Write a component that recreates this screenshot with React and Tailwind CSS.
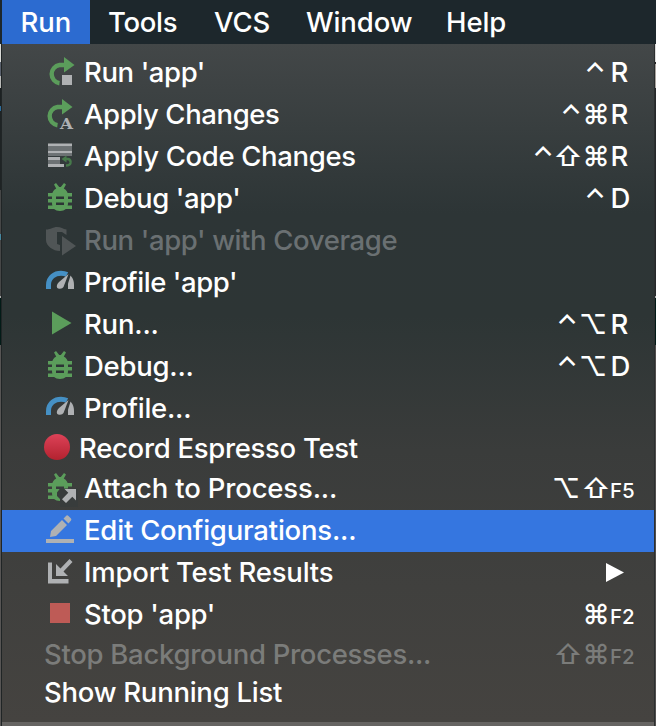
const GREEN = '#5b9d5b';
const GREY = '#afb1b3';

function RerunArrow({ dx = 0 }) {
  return (
    <g transform={`translate(${dx} 0)`}>
      <path d="M17 6H11.500A9.200 9.200 0 0 0 11.500 24.200" fill="none" stroke={GREEN} strokeWidth="4.400" />
      <path d="M16 -2L26.500 6L16 13.500Z" fill={GREEN} />
    </g>
  );
}

function Bug() {
  return (
    <g fill={GREEN}>
      <path d="M6 -0.500L8 -2L11.200 2H12.800L16 -2L18 -0.500L15.800 3.500C18.600 5 20 7.500 20 10.500V18C20 23 17 26 12 26S4 23 4 18V10.500C4 7.500 5.400 5 8.200 3.500Z" />
      <path d="M0 8H24V11.500H0ZM0 14H24V17.500H0ZM0 20.500H24V24H0Z" />
    </g>
  );
}

const icons = {
  rerun: (
    <>
      <RerunArrow />
      <rect x="14" y="16" width="10" height="10" fill={GREY} />
    </>
  ),
  applyChanges: (
    <>
      <RerunArrow dx={-2} />
      <text x="12" y="27.500" fontSize="15.500" fontWeight="bold" fill={GREY} textLength="13" lengthAdjust="spacingAndGlyphs" className="font-['DejaVu_Serif',serif]">A</text>
    </>
  ),
  applyCode: (
    <>
      <path d="M0 0.500H24V3.500H0ZM0 7.500H24V10.500H0ZM0 14H12V17H0ZM0 21H16V24H0Z" fill={GREY} />
      <path d="M0 3.500H24V7.500H0ZM0 10.500H24V13H0ZM0 17H12V21H0Z" fill="#6d7274" />
      <path d="M17 16H20Q23 16.500 22.500 20Q22 22.500 18 22.500" fill="none" stroke="#477a4b" strokeWidth="2.400" />
      <path d="M13.500 16L18.500 12.500V19.500Z" fill="#477a4b" />
    </>
  ),
  bug: (
    <>
      <Bug />
      <path d="M8 11.500H16V14H8ZM8 17.500H16V20H8Z" fill="#2c3435" />
    </>
  ),
  coverage: (
    <>
      <path d="M-2 2.500C3 2.500 5 0 9 0S15 2 18.500 2.500V8L14 5H9V17L12 18V24C5 24 -2 19 -2 13Z" fill="#505556" />
      <path d="M14 9L28 19L14 28.500Z" fill="#505556" />
    </>
  ),
  profile: (
    <>
      <path d="M0.500 20V16C0.500 8 7 4.200 13 4.200Q16.500 4.200 19 5.500" fill="none" stroke="#4590c4" strokeWidth="5" />
      <path d="M20.500 5L15.500 18Q14.500 20 11.500 19.800Q8 19.500 9 16Q9.500 14.500 11 13Z" fill={GREY} />
      <path d="M22.500 6.500Q26 10.500 26 15.500V20H20V14.500Z" fill={GREY} />
    </>
  ),
  play: <path d="M4 0.500L23.500 12L4 23.500Z" fill={GREEN} />,
  record: (
    <>
      <defs>
        <linearGradient id="rec" x1="0" y1="0" x2="0" y2="1">
          <stop offset="0" stopColor="#dd4258" />
          <stop offset="1" stopColor="#b3222f" />
        </linearGradient>
      </defs>
      <circle cx="9" cy="12" r="13" fill="url(#rec)" />
    </>
  ),
  attach: (
    <>
      <Bug />
      <path d="M8 11.500H16V14H8Z" fill="#383c3c" />
      <path d="M9 17.500L12 13.500H30V32H12V24L9 21Z" fill="#383c3c" />
      <path d="M16.500 14H28V25.500L24.300 21.800L18 28.100L14 24.200L20.300 17.800Z" fill={GREY} />
    </>
  ),
  edit: (
    <>
      <path d="M-2 22H26V26H-2Z" fill={GREY} />
      <path d="M2 20L3 14L14 3L19 8L8 19ZM15.500 1.500L18.500 -1.500Q19.500 -2 20.500 -1L23 1.500Q23.800 2.500 23 3.500L20.500 6.500Z" fill={GREY} />
    </>
  ),
  importIcon: (
    <path d="M0 3.500H4V20H20.500V24.500H0ZM8 5L12.500 9.500L21.500 0L24.500 3L15.500 12.500L20 17H8Z" fill={GREY} />
  ),
  stop: <rect x="2" y="2" width="20" height="20" fill="#be5b56" />,
};

const rows = [
  { icon: 'rerun', label: "Run 'app'", track: 'tracking-[-0.4px]', keys: [['⌃', 'w-[30px]']], k: 'R' },
  { icon: 'applyChanges', label: 'Apply Changes', track: 'tracking-[-0.4px]', keys: [['⌃', 'w-[22px]'], ['⌘', 'w-[28px]']], k: 'R' },
  { icon: 'applyCode', label: 'Apply Code Changes', track: 'tracking-[-0.34px]', keys: [['⌃', 'w-[22px]'], ['⇧', 'w-[28px]'], ['⌘', 'w-[28px]']], k: 'R' },
  { icon: 'bug', label: "Debug 'app'", track: 'tracking-[-0.35px]', keys: [['⌃', 'w-[30px]']], k: 'D' },
  { icon: 'coverage', label: "Run 'app' with Coverage", track: 'tracking-[-0.38px]', disabled: 'text-[#6a7072]' },
  { icon: 'profile', label: "Profile 'app'", track: 'tracking-[-0.42px]' },
  { icon: 'play', label: 'Run...', track: 'tracking-[-0.2px]', keys: [['⌃', 'w-[18px]'], ['⌥', 'w-[34px]']], k: 'R' },
  { icon: 'bug', label: 'Debug...', track: 'tracking-[-0.25px]', keys: [['⌃', 'w-[18px]'], ['⌥', 'w-[34px]']], k: 'D' },
  { icon: 'profile', label: 'Profile...', track: 'tracking-[-0.27px]' },
  { icon: 'record', label: 'Record Espresso Test', track: 'tracking-[-0.3px]', short: true, shift: 'ml-px' },
  { icon: 'attach', label: 'Attach to Process...', track: 'tracking-[-0.16px]', keys: [['⌥', 'w-[32px]'], ['⇧', 'w-[28px]']], k: 'F5' },
  { icon: 'edit', label: 'Edit Configurations...', track: 'tracking-[-0.21px]', active: true },
  { icon: 'importIcon', label: 'Import Test Results', track: 'tracking-[-0.19px]', submenu: true },
  { icon: 'stop', label: "Stop 'app'", track: 'tracking-[-0.3px]', keys: [['⌘', 'w-[28px]']], k: 'F2' },
  { label: 'Stop Background Processes...', track: 'tracking-[-0.29px]', disabled: 'text-[#7b7c7a]', short: true, keys: [['⇧', 'w-[28px]'], ['⌘', 'w-[28px]']], k: 'F2' },
  { label: 'Show Running List', track: 'tracking-[-0.26px]', short: true },
];

function Row({ row }) {
  const record = row.icon === 'record';
  return (
    <div
      className={`flex items-center pl-[42px] ${row.short ? 'h-[38px]' : 'h-[42px]'} ${row.active ? 'bg-[#3576e0]' : ''} ${row.disabled || 'text-white'}`}
    >
      {row.icon && (
        <svg
          className={`h-7 shrink-0 overflow-visible ${record ? 'w-[34px]' : 'ml-1 w-9'}`}
          viewBox={record ? '-4 0 34 28' : '0 0 36 28'}
        >
          {icons[row.icon]}
        </svg>
      )}
      <span className={`whitespace-pre ${row.track} ${row.shift || ''}`}>{row.label}</span>
      {row.k && (
        <span className="ml-auto flex items-center">
          {row.keys.map(([g, w]) => (
            <span key={g} className={`flex justify-center ${w}`}>{g}</span>
          ))}
          <span className={`w-11 ${row.k.length > 1 ? 'pt-1 text-[20.500px]' : 'pl-[0.5px]'}`}>{row.k}</span>
        </span>
      )}
      {row.submenu && (
        <svg className="mr-[30px] ml-auto h-5 w-[18px]" viewBox="0 0 18 20">
          <path d="M0 0L18 9.500L0 19Z" fill="#fff" />
        </svg>
      )}
    </div>
  );
}

function LeftEdge() {
  return (
    <div className="w-[2px] border-r border-[#202526] bg-[#303435]">
      <div className="h-[18px] bg-[#d8d9d6]" />
      <div className="h-[14px] bg-[#59606c]" />
      <div className="h-[12px] bg-[#b9bab8]" />
      <div className="h-[18px] bg-[#1c2122]" />
      <div className="h-[5px] bg-[#2d6d9c]" />
      <div className="h-[79px] bg-[#1e2324]" />
      <div className="h-[44px] bg-[#464747]" />
      <div className="h-[6px] bg-[#4688a0]" />
      <div className="h-[56px] bg-[#464747]" />
      <div className="h-[2px] bg-[#a8aaaa]" />
      <div className="h-[47px] bg-[#021b17]" />
      <div className="h-[381px] bg-[#575554]" />
    </div>
  );
}

function RightEdge() {
  return (
    <div className="w-[2px] border-l border-[#2c2f30] bg-[#26292b]">
      <div className="h-[18px] bg-[#dcdcdb]" />
      <div className="h-[2px] bg-[#222]" />
      <div className="h-[24px] bg-[#a9a49f]" />
      <div className="h-[208px] bg-[#26292b]" />
      <div className="h-[2px] bg-[#a8aaaa]" />
      <div className="h-[47px] bg-[#021b17]" />
      <div className="h-[381px] bg-[#514f4e]" />
    </div>
  );
}

export default function App() {
  return (
    <div className="h-[726px] w-[656px] overflow-hidden bg-[#303536] font-['Inter','Liberation_Sans',sans-serif] text-[27.500px] leading-none font-[450] text-white">
      <div className="flex h-11 items-center bg-[#1d272c] pt-[1px] pl-[2px] tracking-[-0.1px]">
        <div className="-mt-[1px] flex h-11 w-[88px] items-center bg-[#2c6bd0] pt-[1px] pl-[18.500px]">Run</div>
        <div className="w-[105px] pl-[18px] tracking-[-0.3px]">Tools</div>
        <div className="w-[92px] pl-[19px]">VCS</div>
        <div className="w-[140px] pl-[19px]">Window</div>
        <div className="pl-[19px]">Help</div>
      </div>
      <div className="flex h-[682px]">
        <LeftEdge />
        <div className="w-[652px]">
          <div className="h-[678px] bg-linear-[180deg,#434748_0%,#2d3536_25%,#2d3535_40%,#3a3c3b_60%,#40403e_80%,#454340_100%] pt-2">
            {rows.map((row) => (
              <Row key={row.label} row={row} />
            ))}
          </div>
          <div className="h-1 bg-[#666462]" />
        </div>
        <RightEdge />
      </div>
    </div>
  );
}
